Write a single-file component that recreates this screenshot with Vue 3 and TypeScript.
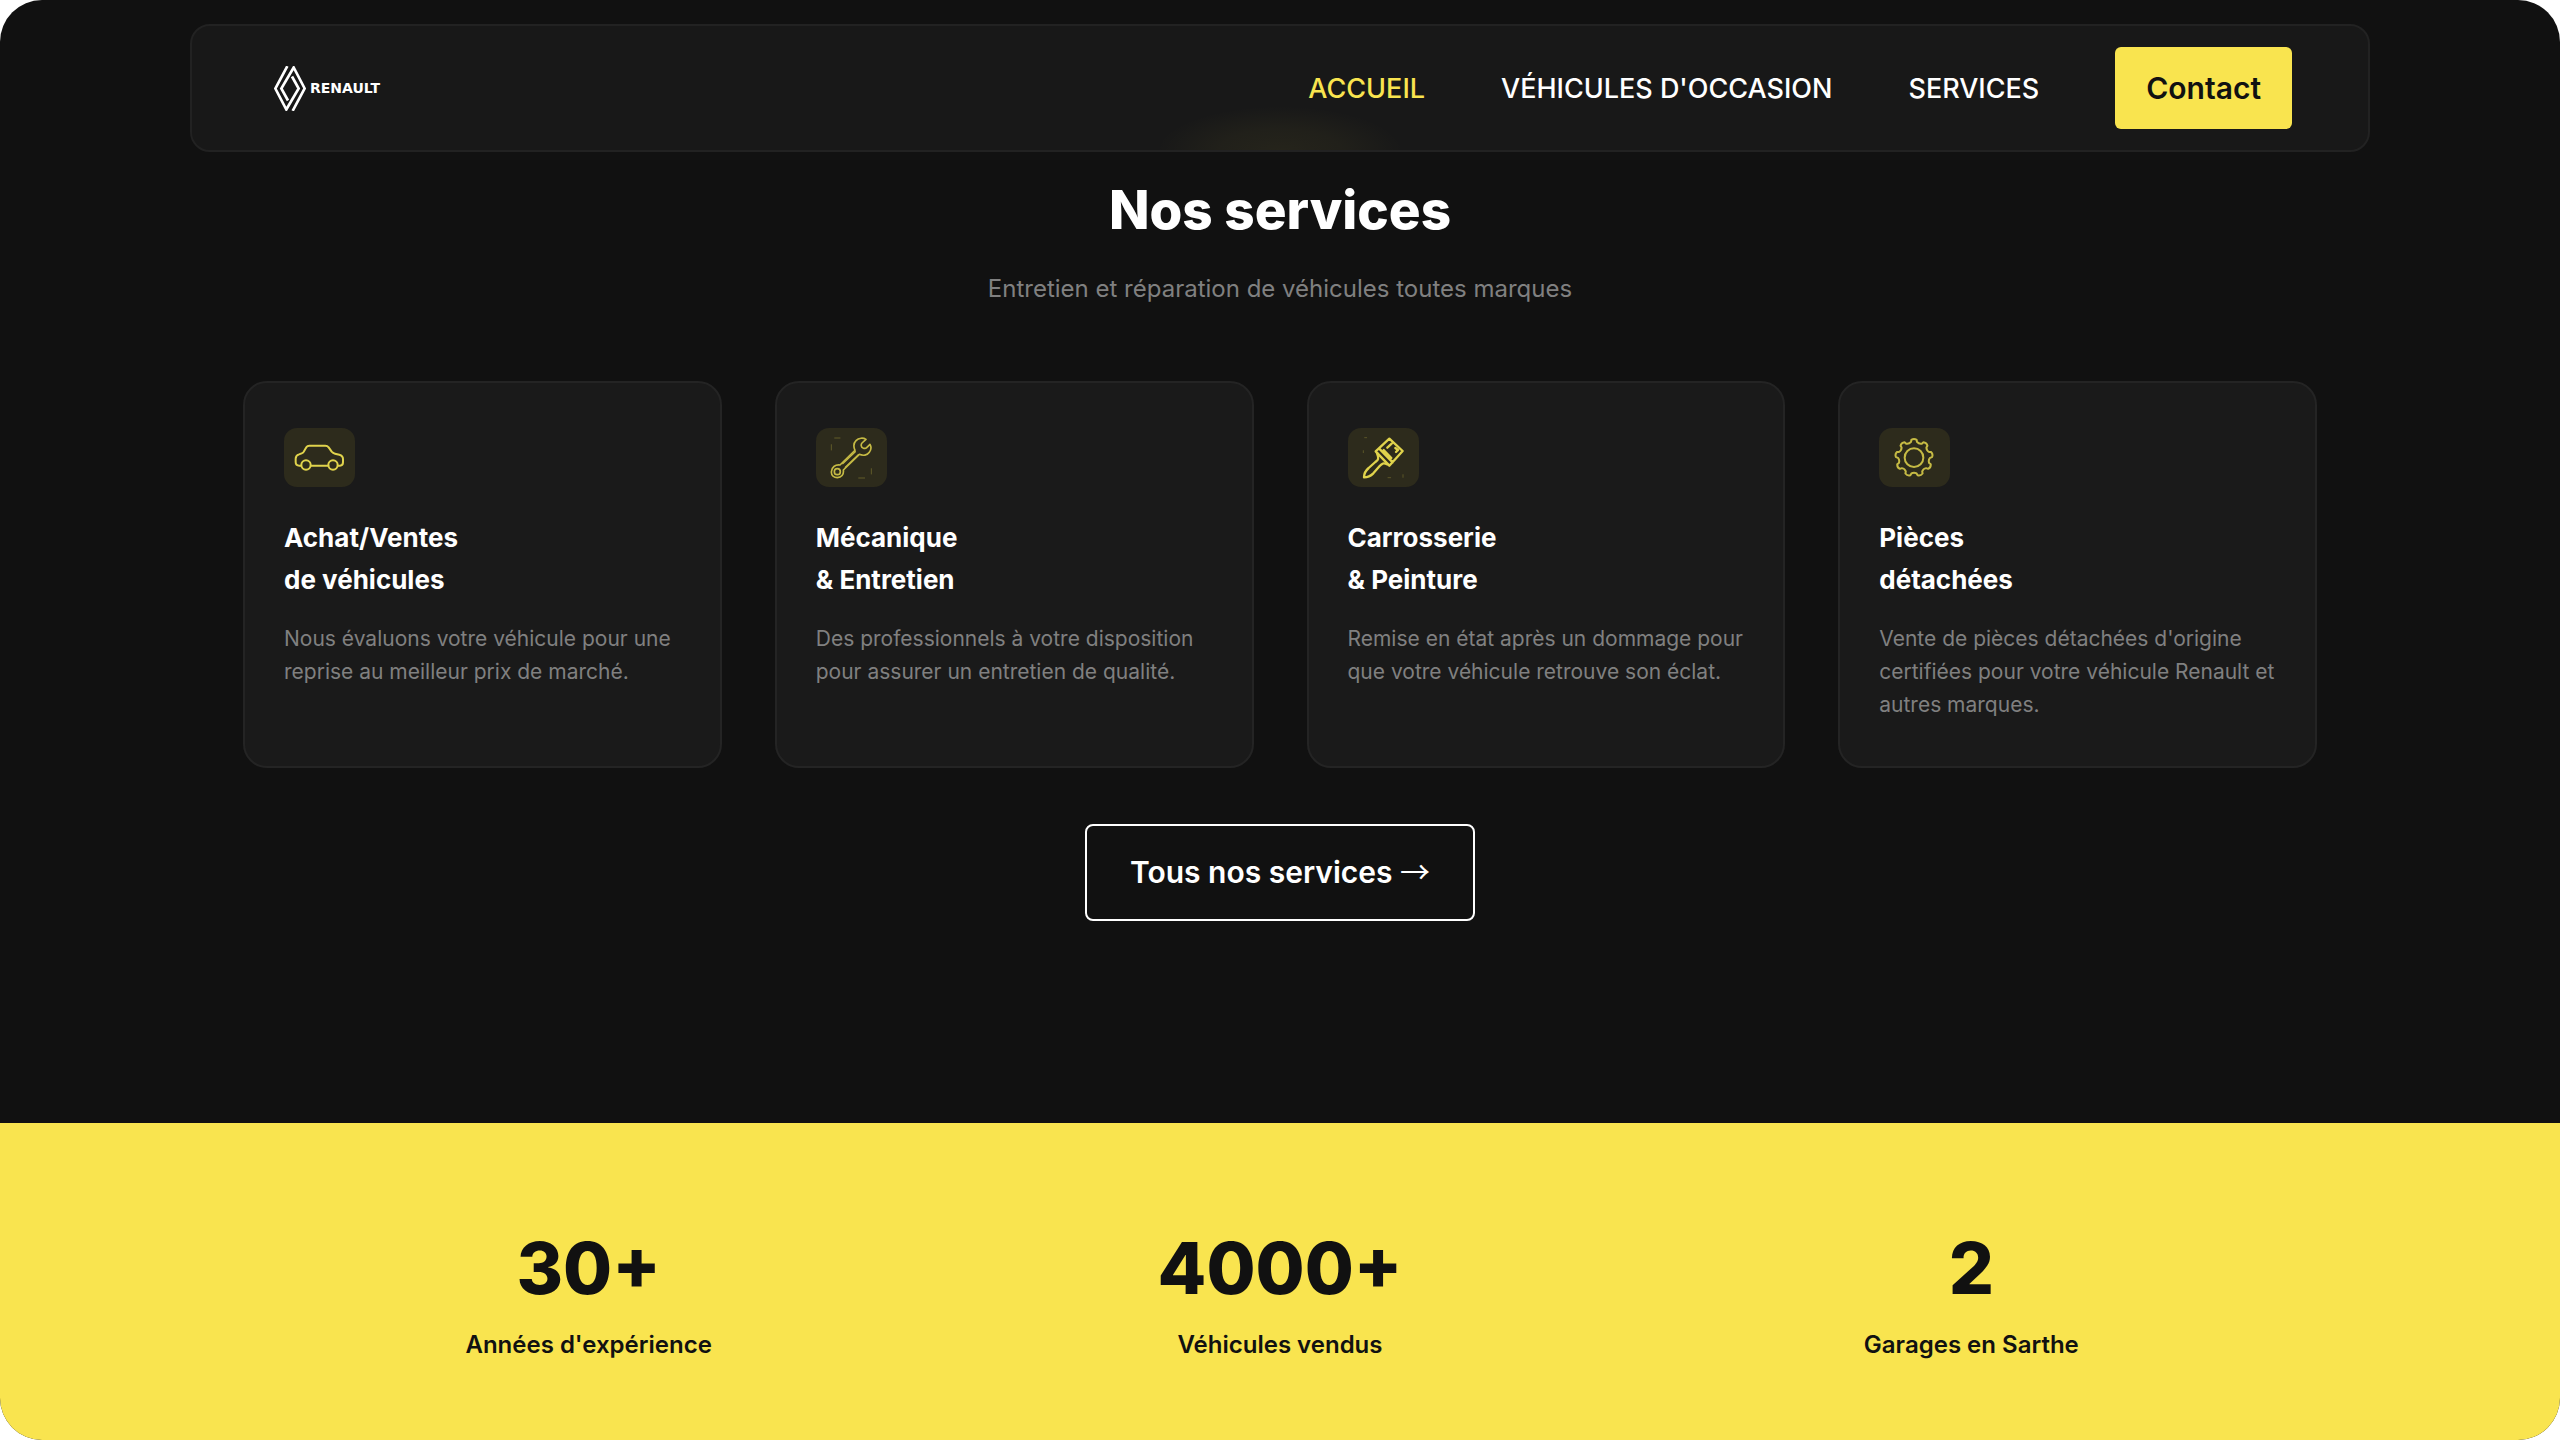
<script setup lang="ts">
interface Service {
  icon: 'car' | 'wrench' | 'brush' | 'gear'
  title: [string, string]
  text: string
}

const links = [
  { label: "ACCUEIL", active: true },
  { label: "VÉHICULES D'OCCASION", active: false },
  { label: "SERVICES", active: false },
]

const services: Service[] = [
  {
    icon: 'car',
    title: ['Achat/Ventes', 'de véhicules'],
    text: 'Nous évaluons votre véhicule pour une reprise au meilleur prix de marché.',
  },
  {
    icon: 'wrench',
    title: ['Mécanique', '& Entretien'],
    text: 'Des professionnels à votre disposition pour assurer un entretien de qualité.',
  },
  {
    icon: 'brush',
    title: ['Carrosserie', '& Peinture'],
    text: 'Remise en état après un dommage pour que votre véhicule retrouve son éclat.',
  },
  {
    icon: 'gear',
    title: ['Pièces', 'détachées'],
    text: "Vente de pièces détachées d'origine certifiées pour votre véhicule Renault et autres marques.",
  },
]

const stats = [
  { value: '30+', label: "Années d'expérience" },
  { value: '4000+', label: 'Véhicules vendus' },
  { value: '2', label: 'Garages en Sarthe' },
]

// Outline of a cog centred on (cx, cy), first tooth pointing up
function gearPath(cx: number, cy: number, teeth: number, outer: number, inner: number): string {
  const step = (Math.PI * 2) / teeth
  const at = (r: number, a: number) =>
    `${(cx + r * Math.sin(a)).toFixed(1)} ${(cy - r * Math.cos(a)).toFixed(1)}`
  let d = ''
  for (let i = 0; i < teeth; i++) {
    const a = i * step
    d += `${i === 0 ? 'M' : 'L'}${at(outer - 2, a - step * 0.21)}`
    d += `Q${at(outer + 3, a)} ${at(outer - 2, a + step * 0.21)}`
    d += `L${at(inner + 2, a + step * 0.27)}`
    d += `Q${at(inner - 3, a + step * 0.5)} ${at(inner + 2, a + step * 0.73)}`
  }
  return d + 'Z'
}

const gear = gearPath(105, 89, 9, 56, 46)
</script>

<template>
  <div class="page">
    <header class="nav">
      <a class="logo" href="#">
        <svg class="logo-mark" viewBox="0 0 96 134" aria-hidden="true">
          <path d="M40 0 4 67 37 130 74 67 54 31M56 134 92 67 59 4 22 67 42 103" />
        </svg>
        <span>RENAULT</span>
      </a>
      <nav class="links">
        <a v-for="l in links" :key="l.label" href="#" :class="{ active: l.active }">{{ l.label }}</a>
        <button type="button" class="contact">Contact</button>
      </nav>
    </header>

    <main class="services">
      <h2>Nos services</h2>
      <p class="lead">Entretien et réparation de véhicules toutes marques</p>

      <div class="cards">
        <article v-for="s in services" :key="s.icon" class="card">
          <div class="icon">
            <svg viewBox="0 0 213 177" aria-hidden="true">
              <g v-if="s.icon === 'car'" stroke-width="6">
                <path d="M51 113H46Q35 113 35 102V92Q35 82 45 79L53 76Q58 74 60 70L67 58Q70 53 76 53H124Q130 53 134 58L143 71Q147 76 153 77L166 80Q177 83 177 93V103Q177 113 168 113H162M81 113H133" />
                <circle cx="66" cy="111" r="14" />
                <circle cx="147" cy="111" r="14" />
              </g>
              <g v-else-if="s.icon === 'wrench'" stroke-width="5" opacity="0.85">
                <path d="M150 34C142 29 128 29 120 38C112 46 113 58 117 67L72 111C58 109 46 118 46 132C46 142 54 149 64 149C76 149 84 140 82 126L130 79C141 84 154 82 160 73C166 65 166 56 162 49L152 59C147 64 136 60 136 54C135 50 136 47 138 45Z" />
                <path d="M80 107 118 71M88 118 127 80" stroke-width="4" />
                <circle cx="64" cy="131" r="9" />
                <path opacity="0.35" stroke-width="3" d="M56 30H72M46 50V66M166 122V138M128 150H146" />
              </g>
              <g v-else-if="s.icon === 'brush'" stroke-width="7">
                <path d="M124 32 164 69 124 113 83 70ZM93 61 134 103M107 66 130 90M131 47 118 59M142 60 150 66M150 66 144 72" />
                <path d="M87 75C94 94 90 96 82 102L62 120Q48 132 48 148Q64 148 76 136L95 114C102 106 106 104 118 109" />
                <path opacity="0.25" stroke-width="3" d="M50 29H56M46 68V74M165 140V148M120 149H128" />
              </g>
              <g v-else stroke-width="6" opacity="0.85">
                <path :d="gear" />
                <circle cx="105" cy="89" r="28" />
              </g>
            </svg>
          </div>
          <h3>{{ s.title[0] }}<br />{{ s.title[1] }}</h3>
          <p>{{ s.text }}</p>
        </article>
      </div>

      <button type="button" class="all">Tous nos services <span class="arrow">→</span></button>
    </main>

    <section class="stats">
      <dl>
        <div v-for="s in stats" :key="s.label" class="stat">
          <dt>{{ s.label }}</dt>
          <dd>{{ s.value }}</dd>
        </div>
      </dl>
    </section>
  </div>
</template>

<style>
body {
  margin: 0;
  background: #fff;
}
</style>

<style scoped>
.page {
  display: flex;
  flex-direction: column;
  min-height: 100vh;
  box-sizing: border-box;
  padding-top: 24px;
  border-radius: 42px;
  overflow: hidden;
  background: #111;
  color: #fff;
  font-family: Inter, "Liberation Sans", sans-serif;
}

.nav {
  display: flex;
  align-items: center;
  justify-content: space-between;
  box-sizing: border-box;
  width: 86%;
  max-width: 2180px;
  margin: 0 auto;
  padding: 21px 76px;
  border: 2px solid #222;
  border-radius: 20px;
  background:
    radial-gradient(ellipse 124px 46px at 50% 100%, rgba(250, 229, 78, 0.06), rgba(250, 229, 78, 0.04) 50%, transparent),
    #181818;
  background-origin: border-box;
}

.logo {
  display: flex;
  align-items: center;
  gap: 4px;
  margin-left: 6px;
  color: #fff;
  font: bold 14px/20px "DejaVu Sans", sans-serif;
  text-decoration: none;
}

.logo-mark {
  width: 32px;
  height: 45px;
  fill: none;
  stroke: currentColor;
  stroke-width: 8;
}

.links {
  display: flex;
  align-items: center;
  gap: 76px;
}

.links a {
  padding-top: 2px;
  color: #fff;
  font-size: 27px;
  font-weight: 500;
  line-height: 40px;
  text-decoration: none;
}

.links a.active {
  color: #f9e44f;
}

.contact {
  height: 82px;
  padding: 0 31px;
  border: 0;
  border-radius: 6px;
  background: #f9e44f;
  color: #111;
  font: 600 30px/40px Inter, sans-serif;
}

.services {
  display: flex;
  flex-direction: column;
  align-items: center;
  flex: 1;
  box-sizing: border-box;
  width: 82%;
  max-width: 2074px;
  margin: 0 auto;
  padding: 25px 0 202px;
}

h2 {
  margin: 0;
  font-size: 53px;
  font-weight: 800;
  line-height: 66px;
}

.lead {
  margin: 26px 0 0;
  color: #808080;
  font-size: 24px;
  line-height: 40px;
}

.cards {
  display: grid;
  grid-template-columns: repeat(4, 1fr);
  gap: 53px;
  width: 100%;
  margin: 72px 0 56px;
}

.card {
  padding: 45px 39px;
  border: 2px solid #242424;
  border-radius: 24px;
  background: #1a1a1a;
}

.icon {
  width: 71px;
  height: 59px;
  border-radius: 13px;
  background: #2d2b1c;
}

.icon svg {
  display: block;
  width: 100%;
  height: 100%;
  fill: none;
  stroke: #e0d34c;
  stroke-linecap: round;
  stroke-linejoin: round;
}

h3 {
  margin: 30px 0 0;
  font-size: 26px;
  font-weight: 700;
  line-height: 42px;
}

.card p {
  margin: 21px 0 0;
  color: #808080;
  font-size: 21px;
  line-height: 33px;
}

.all {
  height: 97px;
  padding: 0 43px 2px;
  border: 2px solid #fff;
  border-radius: 8px;
  background: transparent;
  color: #fff;
  font: 600 30px/40px Inter, sans-serif;
}

.arrow {
  font-family: "Noto Sans CJK JP", sans-serif;
  font-weight: 400;
  line-height: 1;
}

.stats {
  background: #f9e44f;
  color: #111;
}

dl {
  display: grid;
  grid-template-columns: repeat(3, 1fr);
  width: 82%;
  max-width: 2074px;
  margin: 0 auto;
  padding: 101px 0 75px;
}

.stat {
  display: flex;
  flex-direction: column-reverse;
  align-items: center;
}

dt {
  margin-top: 13px;
  font-size: 24px;
  font-weight: 600;
  line-height: 40px;
}

dd {
  margin: 0;
  font-size: 71px;
  font-weight: 800;
  line-height: 88px;
}
</style>
